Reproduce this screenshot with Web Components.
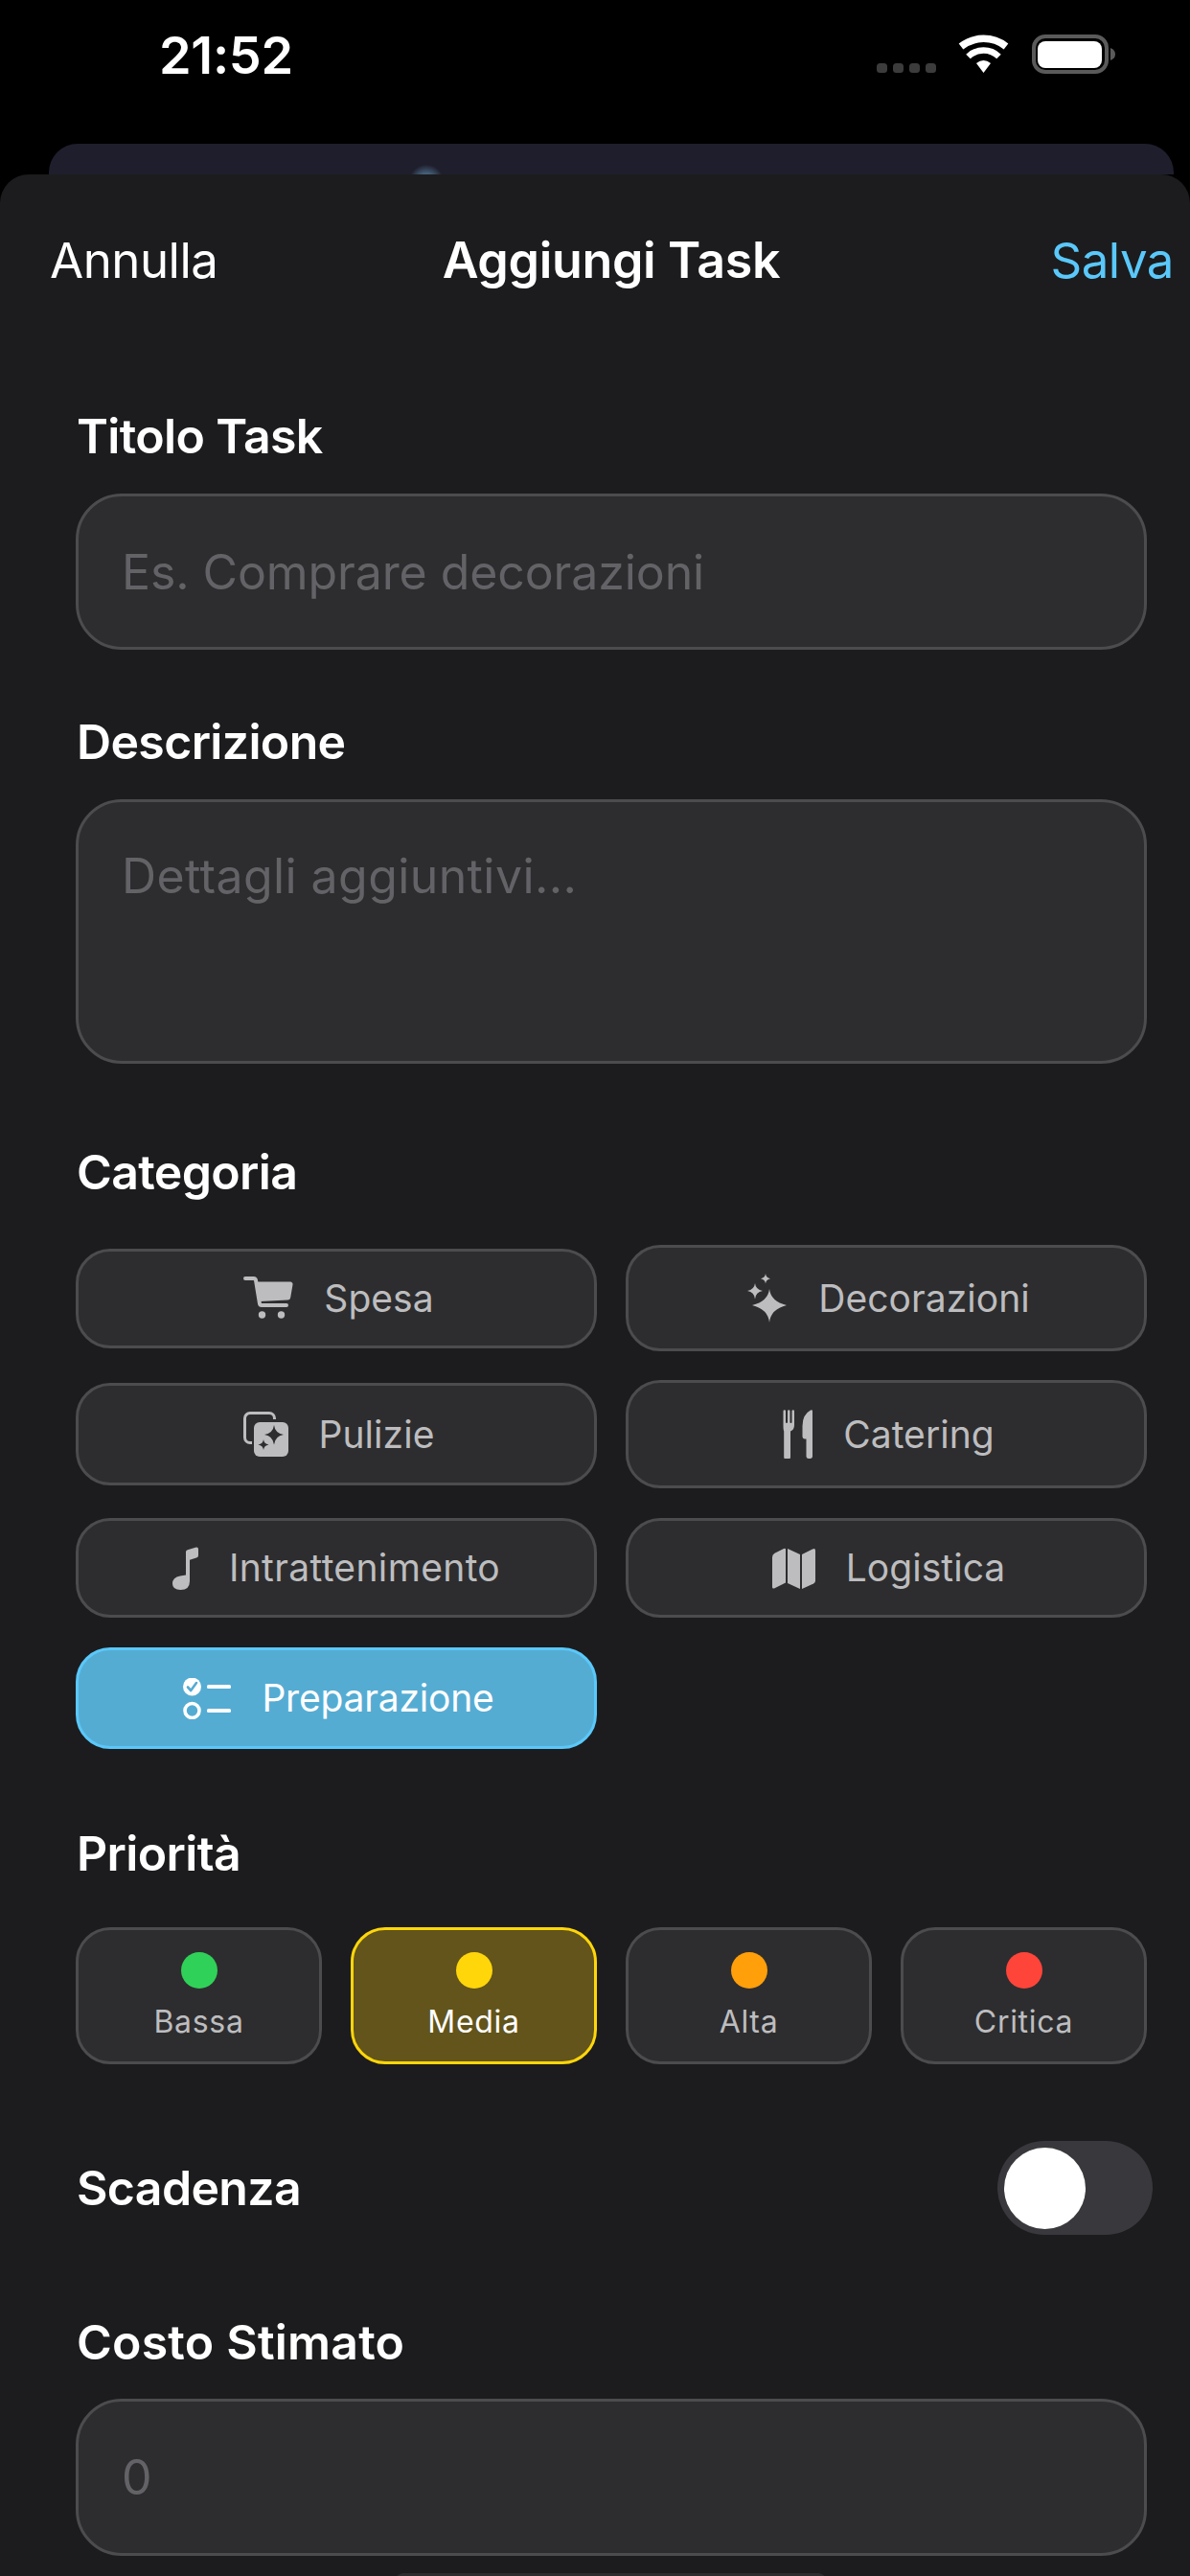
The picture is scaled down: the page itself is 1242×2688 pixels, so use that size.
<!DOCTYPE html>
<html lang="it"><head><meta charset="utf-8"><title>Aggiungi Task</title>
<style>
html,body{margin:0;background:#000}
body{width:1242px;height:2688px;overflow:hidden;font-family:Inter,"Liberation Sans",sans-serif;color:#fff}
svg{display:block;fill:currentColor}
</style></head><body>
<task-screen>
  <status-bar time="21:52"></status-bar>
  <back-card></back-card>
  <task-sheet>
    <nav-bar slot="nav" title-text="Aggiungi Task" cancel="Annulla" save="Salva"></nav-bar>
    <form-field label="Titolo Task" style="--mt:0px;--gap:31px"><text-box h="163" placeholder="Es. Comprare decorazioni"></text-box></form-field>
    <form-field label="Descrizione" style="--mt:63px;--gap:31px"><text-box h="276" placeholder="Dettagli aggiuntivi..." top style="--ls:.4px"></text-box></form-field>
    <form-field label="Categoria" style="--mt:80px;--gap:47px">
      <chip-grid>
        <cat-chip style="--h:104px">
          <svg slot="icon" width="52" height="46" viewBox="0 0 52 46"><path d="M2 2h8.500a2.500 2.500 0 0 1 2.500 2l4 24.500a2 2 0 0 0 2 1.500H45" fill="none" stroke="currentColor" stroke-width="4" stroke-linecap="round" stroke-linejoin="round"/><path d="M13.500 5.500H49a2.500 2.500 0 0 1 2.500 3l-2.300 13.500a3 3 0 0 1-3 2.500L16.800 26z"/><circle cx="19.500" cy="40" r="3.700"/><circle cx="39.500" cy="40" r="3.700"/></svg>Spesa</cat-chip>
        <cat-chip style="--h:111px">
          <svg slot="icon" width="42" height="51" viewBox="0 0 42 51"><path d="M23 16q1.500 13 18 17q-16.500 4-18 18q-1.500-14-18-18q16.500-4 18-17z"/><path d="M8 10q.7 6.700 8 8q-7.300 1.300-8 8.500q-.7-7.200-8-8.500q7.300-1.300 8-8z"/><path d="M19 0q.5 4.500 5 5.200q-4.500.8-5 5.300q-.5-4.500-5-5.300q4.500-.7 5-5.200z"/></svg>Decorazioni</cat-chip>
        <cat-chip style="--h:107px">
          <svg slot="icon" width="47" height="47" viewBox="0 0 47 47"><path d="M9 32.500H7A5.500 5.500 0 0 1 1.500 27V7A5.500 5.500 0 0 1 7 1.500h20A5.500 5.500 0 0 1 32.500 7v1" fill="none" stroke="currentColor" stroke-width="3"/><rect x="11" y="11" width="36" height="36" rx="6"/><path d="M32 14q1 8.500 10 10q-9 1.500-10 10.500q-1-9-10-10.500q9-1.500 10-10z" fill="#2d2d2f"/><path d="M21 29q.5 4.500 5.500 5.500q-5 .9-5.500 5.500q-.5-4.600-5.500-5.500q5-1 5.500-5.500z" fill="#2d2d2f"/></svg>Pulizie</cat-chip>
        <cat-chip style="--h:113px">
          <svg slot="icon" width="31" height="51" viewBox="0 0 31 51"><path d="M0 1.500a1.200 1.200 0 0 1 2.500 0V13q0 1 1 1t1-1V1.500a1.200 1.200 0 0 1 2.500 0V13q0 1 1 1t1-1V1.500a1.200 1.200 0 0 1 2.500 0V16q0 5-4 6.500V49a2.500 2.500 0 0 1-6.800 0V22.500Q0 21 0 16z" transform="translate(0.500 0)"/><path d="M31 1.500V49a2.500 2.500 0 0 1-2.500 2h-1.500a2.500 2.500 0 0 1-2.500-2V30.500H23q-2.500 0-2.500-3V17Q20.500 5 29 .5q2-.7 2 1z"/></svg>Catering</cat-chip>
        <cat-chip style="--h:104px;--pl:0px;--ls:.35px">
          <svg slot="icon" width="27" height="45" viewBox="0 0 27 45"><path d="M14 5.500q0-1.800 1.800-2.300L24 .7Q27 0 27 2.500V9q0 2-2 2.600L18 13.800V36q0 9-9.500 9Q0 45 0 38.500 0 32 8 30.500l6-.9z"/></svg>Intrattenimento</cat-chip>
        <cat-chip style="--h:104px">
          <svg slot="icon" width="45" height="43" viewBox="0 0 45 43"><path d="M0 10q0-3 2.500-4.200L12 1q2-1 2 1v34.500L2 42.500Q0 43 0 41z"/><path d="M16 1l13 6v36l-13-6z"/><path d="M31 7l11-5.500Q45 0 45 3v31.500q0 2-2 3L31 43z"/></svg>Logistica</cat-chip>
        <cat-chip selected style="--h:106px;--ls:-.2px">
          <svg slot="icon" width="50" height="43" viewBox="0 0 50 43"><circle cx="9.500" cy="9" r="9.500"/><path d="M5 9.500l3.200 3.500 5.800-8" fill="none" stroke="#55acd3" stroke-width="2.600" stroke-linecap="round" stroke-linejoin="round"/><circle cx="9.500" cy="34" r="7.500" fill="none" stroke="currentColor" stroke-width="3.600"/><rect x="25" y="7" width="25" height="4" rx="1.500"/><rect x="25" y="32" width="25" height="4" rx="1.500"/></svg>Preparazione</cat-chip>
      </chip-grid>
    </form-field>
    <form-field label="Priorità" style="--mt:76px;--gap:48px">
      <priority-row>
        <priority-chip color="#30d158">Bassa</priority-chip>
        <priority-chip color="#ffd60a" selected>Media</priority-chip>
        <priority-chip color="#ff9f0a">Alta</priority-chip>
        <priority-chip color="#ff453a">Critica</priority-chip>
      </priority-row>
    </form-field>
    <toggle-row label="Scadenza"></toggle-row>
    <form-field label="Costo Stimato" style="--mt:79px;--gap:30px;--lls:.2px"><text-box h="164" placeholder="0"></text-box></form-field>
    <peek-bar></peek-bar>
  </task-sheet>
</task-screen>
<script>
const def=(name,html)=>customElements.define(name,class extends HTMLElement{
  constructor(){super();this.attachShadow({mode:'open'});}
  connectedCallback(){this.shadowRoot.innerHTML=typeof html==='function'?html(this):html;}
});
def('task-screen',`<style>:host{display:flex;flex-direction:column;width:1242px;height:2688px;overflow:hidden}</style><slot></slot>`);
def('status-bar',h=>`<style>:host{display:flex;justify-content:space-between;align-items:flex-start;height:150px;box-sizing:border-box;padding:36px 78px 0 166px}
.t{font:600 54px/43px Inter,"Liberation Sans",sans-serif;letter-spacing:-.3px;color:#fff}</style>
<div class="t">${h.getAttribute('time')||''}</div>
<svg width="249" height="41" viewBox="0 0 249 41" style="display:block">
<g fill="#3c3c3c"><rect x="0" y="30" width="11" height="10" rx="3.500"/><rect x="17" y="30" width="11" height="10" rx="3.500"/><rect x="34" y="30" width="11" height="10" rx="3.500"/><rect x="51" y="30" width="11" height="10" rx="3.500"/></g>
<g transform="translate(85 1)" fill="none" stroke="#fff" stroke-linecap="butt"><path d="M3 11.500A38 38 0 0 1 50 11.500" stroke-width="7.500"/><path d="M10.500 22A23 23 0 0 1 42.500 22" stroke-width="6.500"/><path d="M19 29Q26.500 23 34 29L26.500 39Z" fill="#fff" stroke="none"/></g>
<rect x="164" y="2" width="76" height="37" rx="12" fill="none" stroke="#5a5a5a" stroke-width="4"/>
<rect x="168" y="7" width="67" height="28" rx="8" fill="#fff"/>
<path d="M244 14q5 2 5 6.500t-5 6.500z" fill="#5a5a5a"/></svg>`);
def('back-card',`<style>:host{display:block;position:relative;height:32px;margin:0 17px 0 51px;background:#1f1e2c;border-radius:30px 30px 0 0;overflow:hidden}
i{position:absolute;left:376px;top:22px;width:36px;height:36px;border-radius:50%;background:radial-gradient(circle,#4f6c82 0%,#45607a 35%,rgba(60,85,110,0) 72%)}</style><i></i>`);
def('task-sheet',`<style>:host{display:block;height:2506px;background:#1c1c1e;border-radius:30px 30px 0 0;overflow:hidden}
.body{display:flex;flex-direction:column;padding:0 45px 0 79px}</style><slot name="nav"></slot><div class="body"><slot></slot></div>`);
def('nav-bar',h=>`<style>:host{display:flex;align-items:center;height:240px;box-sizing:border-box;padding:0 17px 60px 52px;font:400 51px/62px Inter,"Liberation Sans",sans-serif;letter-spacing:-.5px}
.c{color:#fff}.s{color:#5ac8fa}
.m{flex:1;text-align:center;font-size:52px;font-weight:600;padding-right:48px;letter-spacing:-.35px;color:#fff}</style>
<span class="c">${h.getAttribute('cancel')}</span><span class="m">${h.getAttribute('title-text')}</span><span class="s">${h.getAttribute('save')}</span>`);
def('form-field',h=>`<style>:host{display:block;margin-top:var(--mt,0)}
.l{font:600 50px/62px Inter,"Liberation Sans",sans-serif;letter-spacing:var(--lls,-.65px);color:#fff;padding:2px 0 0 1px;margin-bottom:calc(var(--gap,31px) - 2px)}</style>
<div class="l">${h.getAttribute('label')}</div><slot></slot>`);
def('text-box',h=>`<style>:host{display:flex;align-items:${h.hasAttribute('top')?'flex-start':'center'};box-sizing:border-box;height:${h.getAttribute('h')}px;background:#2d2d2f;border:3px solid #4c4c4f;border-radius:48px;padding:${h.hasAttribute('top')?'46px':'0'} 45px 0;font:400 50px/62px Inter,"Liberation Sans",sans-serif;letter-spacing:var(--ls,-.1px);color:#636367}</style>${h.getAttribute('placeholder')}`);
def('chip-grid',`<style>:host{display:grid;grid-template-columns:544px 544px;column-gap:30px;row-gap:30px;grid-template-rows:111px 113px 106px 106px;align-items:center}</style><slot></slot>`);
def('cat-chip',h=>`<style>:host{display:flex;align-items:center;justify-content:center;gap:32px;box-sizing:border-box;height:var(--h);padding-left:var(--pl,5px);border-radius:36px;border:3px solid ${h.hasAttribute('selected')?'#5ac8fa':'#4c4c4f'};background:${h.hasAttribute('selected')?'#55acd3':'#2d2d2f'};color:${h.hasAttribute('selected')?'#fff':'#bdbdbf'};font:400 39px/50px Inter,"Liberation Sans",sans-serif;letter-spacing:var(--ls,.05px)}</style><slot name="icon"></slot><span><slot></slot></span>`);
def('priority-row',`<style>:host{display:grid;grid-template-columns:repeat(4,257px);column-gap:30px}</style><slot></slot>`);
def('priority-chip',h=>`<style>:host{display:flex;flex-direction:column;align-items:center;box-sizing:border-box;height:143px;padding-top:23px;border-radius:36px;border:3px solid ${h.hasAttribute('selected')?'#ffd60a':'#4c4c4f'};background:${h.hasAttribute('selected')?'#62541b':'#2d2d2f'};color:${h.hasAttribute('selected')?'#fff':'#bdbdbf'};font:400 32px/40px Inter,"Liberation Sans",sans-serif;letter-spacing:.7px}
i{width:38px;height:38px;border-radius:50%;background:${h.getAttribute('color')};margin-bottom:15px}</style><i></i><span><slot></slot></span>`);
def('toggle-row',h=>`<style>:host{display:flex;align-items:center;justify-content:space-between;height:98px;margin:80px -6px 0 0}
.l{font:600 50px/62px Inter,"Liberation Sans",sans-serif;letter-spacing:-.65px;color:#fff;padding-left:1px}
.t{width:162px;height:98px;border-radius:49px;background:#39393d;box-sizing:border-box;padding:6.500px}
.t i{display:block;width:85px;height:85px;border-radius:50%;background:#fff}</style><div class="l">${h.getAttribute('label')}</div><div class="t"><i></i></div>`);
def('peek-bar',`<style>:host{display:block;align-self:flex-start;width:451px;height:30px;margin:18px 0 0 333px;background:#2d2d2f;border-radius:9px 9px 0 0}</style>`);
</script>
</body></html>
